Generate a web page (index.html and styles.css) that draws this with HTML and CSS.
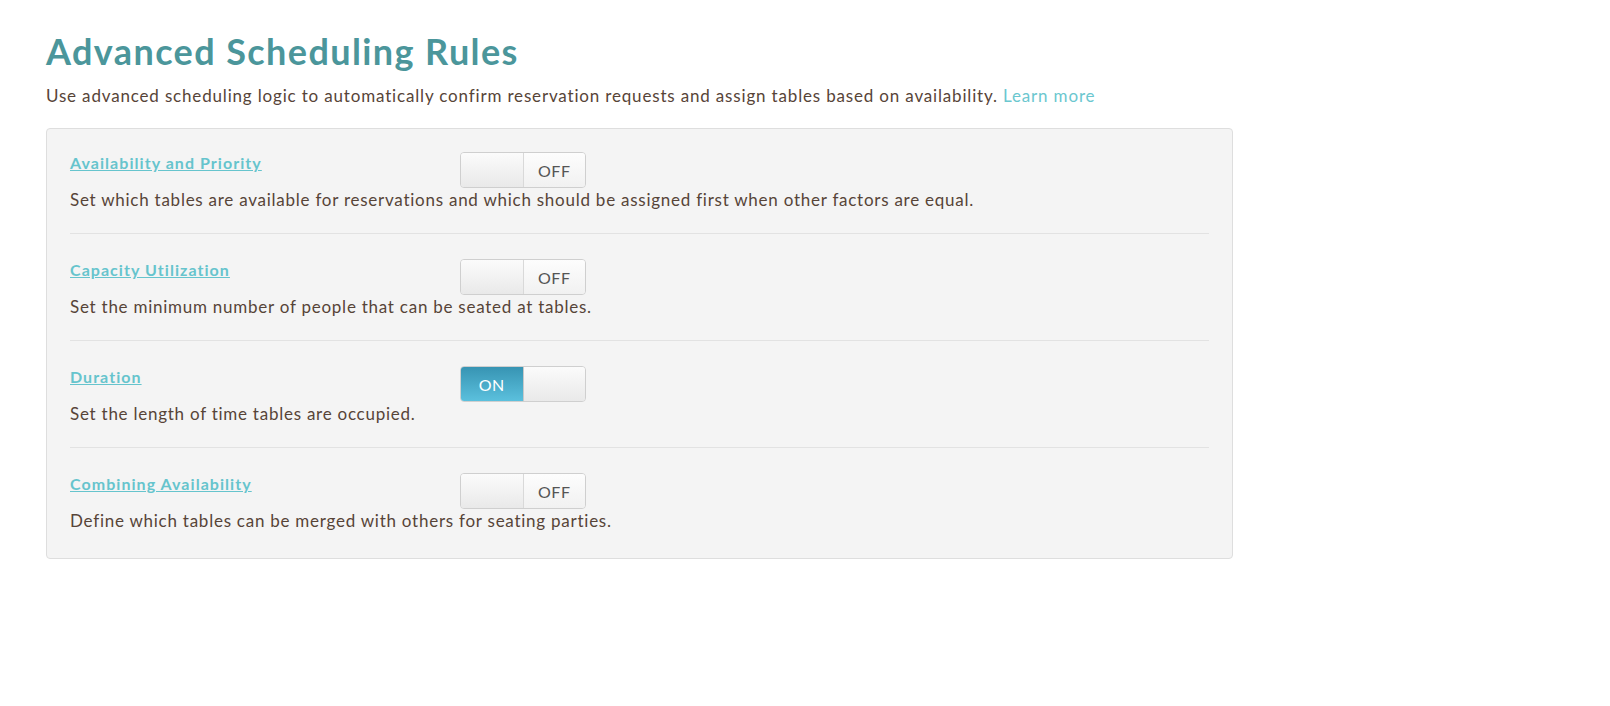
FILE: index.html
```html
<!DOCTYPE html>
<html lang="en">
<head>
    <meta charset="UTF-8">
    <meta name="viewport" content="width=device-width, initial-scale=1.0">
    <title>Advanced Scheduling Rules</title>
    <link rel="stylesheet" href="styles.css">
</head>
<body>
    <div class="page">
        <h1>Advanced Scheduling Rules</h1>
        <p class="intro">Use advanced scheduling logic to automatically confirm reservation requests and assign tables based on availability. <a href="#">Learn more</a></p>

        <div class="rules">
            <div class="rule">
                <div class="rule-head">
                    <a href="#" class="rule-title">Availability and Priority</a>
                    <div class="switch off"><span class="blank"></span><span class="label">OFF</span></div>
                </div>
                <p class="rule-desc">Set which tables are available for reservations and which should be assigned first when other factors are equal.</p>
            </div>
            <div class="rule">
                <div class="rule-head">
                    <a href="#" class="rule-title">Capacity Utilization</a>
                    <div class="switch off"><span class="blank"></span><span class="label">OFF</span></div>
                </div>
                <p class="rule-desc">Set the minimum number of people that can be seated at tables.</p>
            </div>
            <div class="rule">
                <div class="rule-head">
                    <a href="#" class="rule-title">Duration</a>
                    <div class="switch on"><span class="label">ON</span><span class="blank"></span></div>
                </div>
                <p class="rule-desc">Set the length of time tables are occupied.</p>
            </div>
            <div class="rule">
                <div class="rule-head">
                    <a href="#" class="rule-title">Combining Availability</a>
                    <div class="switch off"><span class="blank"></span><span class="label">OFF</span></div>
                </div>
                <p class="rule-desc">Define which tables can be merged with others for seating parties.</p>
            </div>
        </div>
    </div>
</body>
</html>
```

FILE: styles.css
```css
body {
    margin: 0;
    font-family: Lato, "Open Sans", Arial, sans-serif;
    color: #574438;
    background: #fff;
}
.page {
    padding: 29px 0 0 46px;
    width: 1187px;
}
h1 {
    margin: 0;
    font-size: 36px;
    line-height: 44px;
    font-weight: 700;
    letter-spacing: 1.4px;
    color: #4b969b;
}
.intro {
    margin: 11px 0 20px;
    font-size: 17px;
    line-height: 24px;
    letter-spacing: 0.83px;
}
.intro a {
    color: #6bc7cf;
    text-decoration: none;
}
.rules {
    background: #f4f4f4;
    border: 1px solid #dedede;
    border-radius: 4px;
    padding: 0 23px;
}
.rule {
    padding: 24px 0 21px;
    border-bottom: 1px solid #e2e2e2;
}
.rule:first-child {
    padding-top: 22px;
}
.rule:last-child {
    border-bottom: none;
    padding-bottom: 25px;
}
.rule-head {
    display: flex;
    align-items: flex-start;
}
.rule-title {
    width: 390px;
    font-size: 16px;
    line-height: 24px;
    font-weight: 700;
    letter-spacing: 1.05px;
    color: #66c4cd;
}
.rule-desc {
    margin: 0;
    font-size: 17px;
    line-height: 24px;
    letter-spacing: 0.75px;
}
.switch {
    margin-top: 1px;
    display: flex;
    width: 126px;
    height: 36px;
    box-sizing: border-box;
    border: 1px solid #cfcfcf;
    border-radius: 4px;
    overflow: hidden;
}
.switch span {
    width: 50%;
    display: flex;
    align-items: center;
    justify-content: center;
    font-size: 16px;
    letter-spacing: 0.5px;
}
.switch .blank {
    background: linear-gradient(#fbfbfb, #e9e9e9);
}
.switch.off .blank {
    border-right: 1px solid #d9d9d9;
}
.switch.on .blank {
    border-left: 1px solid #c9c9c9;
}
.switch.off .label {
    background: linear-gradient(#fdfdfd, #f1f1f1);
    color: #555;
}
.switch.on .label {
    background: linear-gradient(#3794b3, #5bc0dd);
    color: #fff;
}
```
